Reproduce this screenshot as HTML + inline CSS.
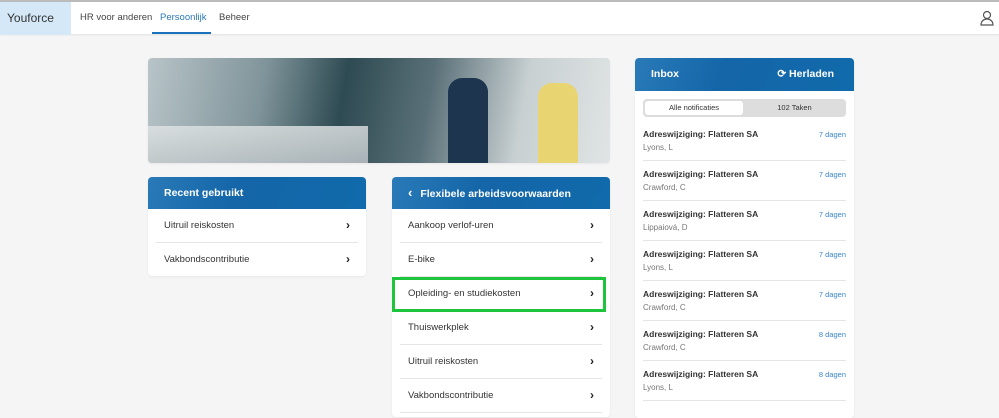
<!DOCTYPE html><html><head><style>
*{box-sizing:border-box;margin:0;padding:0}
body{width:999px;height:404px;overflow:hidden;background:#f5f5f5;font-family:"Liberation Sans",sans-serif;font-size:9.5px;color:#333;position:relative}
.top{position:absolute;left:0;top:0;width:999px;height:34px;background:#fff;border-top:2px solid #bbb;box-shadow:0 1px 2px rgba(0,0,0,.08)}
.logo{position:absolute;left:0;top:0;width:71px;height:33px;background:#d4e8f8;font-size:12px;line-height:32px;padding-left:7px;color:#333}
.nav{position:absolute;top:0;line-height:32px;font-size:9.5px;color:#444}
.card{position:absolute;background:#fff;border-radius:4px;overflow:hidden;box-shadow:0 1px 2px rgba(0,0,0,.06)}
.hd{height:32px;background:linear-gradient(110deg,#2a7ab8 0%,#1466a8 40%,#106aab 100%);color:#fff;font-size:10.5px;font-weight:bold;line-height:32px;padding-left:16px}
.row{height:34px;line-height:34px;margin:0 8px;padding-left:8px;border-bottom:1px solid #e5e5e5;position:relative;font-size:9.5px}
.row:after{content:"›";position:absolute;right:8px;top:-1px;font-weight:bold;font-size:12px;color:#222}
.it{height:40px;margin:0 8px;border-bottom:1px solid #e5e5e5;position:relative;padding-top:8px}
.it b{font-size:8.5px;color:#333}
.it .s{font-size:8px;color:#777;margin-top:3px}
.it .d{position:absolute;right:0;top:9px;font-size:7.5px;color:#3a86c8}
</style></head><body>
<div class="top">
<div class="logo">Youforce</div>
<div class="nav" style="left:80px">HR voor anderen</div>
<div class="nav" style="left:160px;color:#2a7ab8">Persoonlijk</div>
<div style="position:absolute;left:152px;top:30px;width:59px;height:2px;background:#1a72bc"></div>
<div class="nav" style="left:219px">Beheer</div>
<svg style="position:absolute;left:980px;top:8px" width="14" height="16" viewBox="0 0 14 16"><circle cx="7" cy="5" r="3.5" fill="none" stroke="#555" stroke-width="1.2"/><path d="M1 15c0-4 3-6 6-6s6 2 6 6z" fill="none" stroke="#555" stroke-width="1.2"/></svg>
</div>
<div class="card" style="left:148px;top:58px;width:462px;height:105px;background:linear-gradient(100deg,#b8c4c8 0%,#7f949a 25%,#2e4a52 42%,#5a7078 60%,#c8d0d2 80%,#e0e4e4 100%)">
<div style="position:absolute;left:0;top:68px;width:220px;height:37px;background:linear-gradient(170deg,#d8dedf,#a8b2b6)"></div>
<div style="position:absolute;left:300px;top:20px;width:40px;height:85px;background:#1e3550;border-radius:14px 14px 0 0"></div>
<div style="position:absolute;left:390px;top:25px;width:40px;height:80px;background:#e8d470;border-radius:14px 14px 0 0"></div>
</div>
<div class="card" style="left:148px;top:177px;width:218px;height:99px">
<div class="hd">Recent gebruikt</div>
<div class="row">Uitruil reiskosten</div>
<div class="row" style="border:none">Vakbondscontributie</div>
</div>
<div class="card" style="left:392px;top:177px;width:218px;height:240px">
<div class="hd"><span style="font-size:13px;margin-right:8px">‹</span>Flexibele arbeidsvoorwaarden</div>
<div class="row">Aankoop verlof-uren</div>
<div class="row">E-bike</div>
<div class="row">Opleiding- en studiekosten</div>
<div class="row">Thuiswerkplek</div>
<div class="row">Uitruil reiskosten</div>
<div class="row">Vakbondscontributie</div>
</div>
<div style="position:absolute;left:392px;top:277px;width:214px;height:35px;border:3px solid #1ec43c"></div>
<div class="card" style="left:635px;top:58px;width:219px;height:360px">
<div class="hd" style="height:33px;line-height:33px">Inbox<span style="position:absolute;right:20px">⟳ Herladen</span></div>
<div style="margin:8px 8px 4px;height:18px;background:#ddd;border-radius:4px;position:relative;font-size:7.5px">
<div style="position:absolute;left:2px;top:2px;width:98px;height:14px;background:#fff;border-radius:3px;text-align:center;line-height:14px">Alle notificaties</div>
<div style="position:absolute;left:100px;right:0;top:2px;text-align:center;line-height:14px">102 Taken</div></div>
<div class="it"><b>Adreswijziging: Flatteren SA</b><div class="s">Lyons, L</div><span class="d">7 dagen</span></div>
<div class="it"><b>Adreswijziging: Flatteren SA</b><div class="s">Crawford, C</div><span class="d">7 dagen</span></div>
<div class="it"><b>Adreswijziging: Flatteren SA</b><div class="s">Lippaiová, D</div><span class="d">7 dagen</span></div>
<div class="it"><b>Adreswijziging: Flatteren SA</b><div class="s">Lyons, L</div><span class="d">7 dagen</span></div>
<div class="it"><b>Adreswijziging: Flatteren SA</b><div class="s">Crawford, C</div><span class="d">7 dagen</span></div>
<div class="it"><b>Adreswijziging: Flatteren SA</b><div class="s">Crawford, C</div><span class="d">8 dagen</span></div>
<div class="it"><b>Adreswijziging: Flatteren SA</b><div class="s">Lyons, L</div><span class="d">8 dagen</span></div>
</div>
</body></html>
